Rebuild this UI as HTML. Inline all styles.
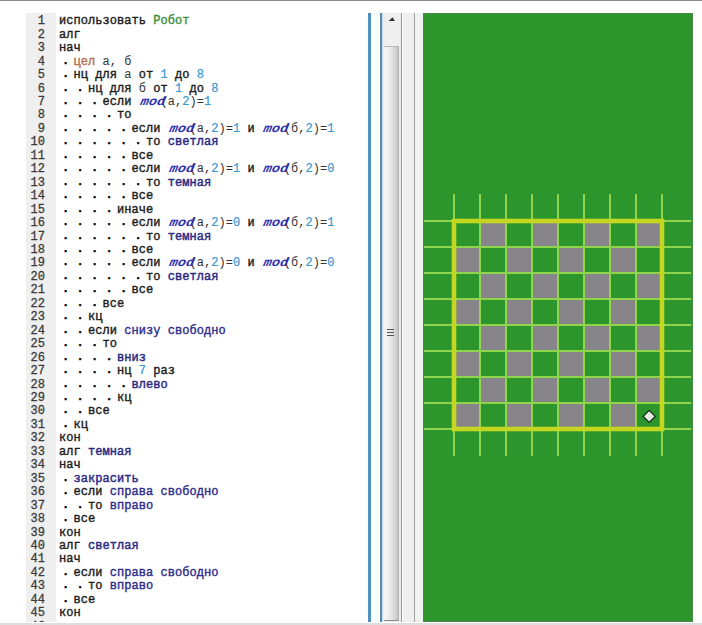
<!DOCTYPE html>
<html><head><meta charset="utf-8">
<style>
html,body{margin:0;padding:0;}
body{width:702px;height:625px;position:relative;overflow:hidden;background:#fff;font-family:"Liberation Mono",monospace;}
.abs{position:absolute;}
#topline{left:0;top:0;width:702px;height:1px;background:#8a8a8a;}
#botline{left:0;top:623px;width:702px;height:2px;background:#dedede;}
#gutter{left:26px;top:13px;width:30px;height:609px;background:#efefef;overflow:hidden;}
#nums{left:0px;top:2.3px;width:19px;text-align:right;font-size:12px;line-height:13.45px;color:#3c3c3c;white-space:pre;-webkit-text-stroke:0.3px #3c3c3c;}
#code{left:59px;top:15.3px;font-size:12px;letter-spacing:0.045px;line-height:13.45px;white-space:pre;color:#222;}
#code i{font-style:normal;}
#code .k{font-weight:normal;color:#1c1c1c;-webkit-text-stroke:0.4px #1c1c1c;}
#code .d{font-weight:bold;color:#000;position:relative;left:3px;top:-1px;-webkit-text-stroke:0.3px #000;}
#code .v{color:#333;}
#code .n{color:#3a98d0;-webkit-text-stroke:0.2px #3a98d0;}
#code .t{color:#b06c48;-webkit-text-stroke:0.35px #b06c48;}
#code .r{color:#3a8f3a;-webkit-text-stroke:0.4px #3a8f3a;}
#code .m{font-weight:bold;font-style:italic;color:#2e2eb0;display:inline-block;transform:scaleX(1.14) skewX(-10deg);transform-origin:0 100%;}
#code .a{color:#2a2a84;-webkit-text-stroke:0.45px #2a2a84;}
#code .c{color:#2e2e8c;-webkit-text-stroke:0.4px #2e2e8c;}
#bl1{left:368px;top:13px;width:3px;height:609px;background:#508fc0;}
#bl1b{left:371px;top:13px;width:9px;height:609px;background:#f4fcfe;}
#bl2{left:380px;top:13px;width:2px;height:609px;background:#6486a8;}
#bl2b{left:382px;top:13px;width:1px;height:609px;background:#c4def0;}
#sb{left:383px;top:13px;width:18px;height:609px;background:#efefef;}
#sbr{left:401px;top:13px;width:1px;height:609px;background:#959595;}
#arrow{left:388px;top:17px;width:0;height:0;border-left:3.5px solid transparent;border-right:3.5px solid transparent;border-bottom:4px solid #2a2a2a;}
#thumb{left:384px;top:46px;width:15px;height:575px;background:linear-gradient(to right,#f6f6f6 0%,#ececec 40%,#c6c6c6 100%);border-top:1px solid #b8b8b8;border-right:1px solid #b0b0b0;border-bottom:1px solid #8a8a8a;box-sizing:border-box;}
.grip{left:387px;width:7px;height:1px;background:#555;}
#p2{left:402px;top:13px;width:12px;height:609px;background:#efefef;}
#p2w{left:402px;top:13px;width:1px;height:609px;background:#fcfcfc;}
#p2l{left:414px;top:13px;width:1px;height:609px;background:#9e9e9e;}
#p3{left:415px;top:13px;width:8px;height:609px;background:#f1f2f2;}
</style></head><body>
<div class="abs" id="topline"></div>
<div class="abs" id="gutter"><div class="abs" id="nums">1
2
3
4
5
6
7
8
9
10
11
12
13
14
15
16
17
18
19
20
21
22
23
24
25
26
27
28
29
30
31
32
33
34
35
36
37
38
39
40
41
42
43
44
45
46</div></div>
<div class="abs" id="code"><i class="k">использовать</i> <i class="r">Робот</i>
<i class="k">алг</i>
<i class="k">нач</i>
<i class="d">.</i> <i class="t">цел</i> <i class="v">а, б</i>
<i class="d">.</i> <i class="k">нц для</i> <i class="v">а</i> <i class="k">от</i> <i class="n">1</i> <i class="k">до</i> <i class="n">8</i>
<i class="d">. .</i> <i class="k">нц для</i> <i class="v">б</i> <i class="k">от</i> <i class="n">1</i> <i class="k">до</i> <i class="n">8</i>
<i class="d">. . .</i> <i class="k">если</i> <i class="m">mod</i><i class="v">(а,</i><i class="n">2</i><i class="v">)=</i><i class="n">1</i>
<i class="d">. . . .</i> <i class="k">то</i>
<i class="d">. . . . .</i> <i class="k">если</i> <i class="m">mod</i><i class="v">(а,</i><i class="n">2</i><i class="v">)=</i><i class="n">1</i> <i class="k">и</i> <i class="m">mod</i><i class="v">(б,</i><i class="n">2</i><i class="v">)=</i><i class="n">1</i>
<i class="d">. . . . . .</i> <i class="k">то</i> <i class="a">светлая</i>
<i class="d">. . . . .</i> <i class="k">все</i>
<i class="d">. . . . .</i> <i class="k">если</i> <i class="m">mod</i><i class="v">(а,</i><i class="n">2</i><i class="v">)=</i><i class="n">1</i> <i class="k">и</i> <i class="m">mod</i><i class="v">(б,</i><i class="n">2</i><i class="v">)=</i><i class="n">0</i>
<i class="d">. . . . . .</i> <i class="k">то</i> <i class="a">темная</i>
<i class="d">. . . . .</i> <i class="k">все</i>
<i class="d">. . . .</i> <i class="k">иначе</i>
<i class="d">. . . . .</i> <i class="k">если</i> <i class="m">mod</i><i class="v">(а,</i><i class="n">2</i><i class="v">)=</i><i class="n">0</i> <i class="k">и</i> <i class="m">mod</i><i class="v">(б,</i><i class="n">2</i><i class="v">)=</i><i class="n">1</i>
<i class="d">. . . . . .</i> <i class="k">то</i> <i class="a">темная</i>
<i class="d">. . . . .</i> <i class="k">все</i>
<i class="d">. . . . .</i> <i class="k">если</i> <i class="m">mod</i><i class="v">(а,</i><i class="n">2</i><i class="v">)=</i><i class="n">0</i> <i class="k">и</i> <i class="m">mod</i><i class="v">(б,</i><i class="n">2</i><i class="v">)=</i><i class="n">0</i>
<i class="d">. . . . . .</i> <i class="k">то</i> <i class="a">светлая</i>
<i class="d">. . . . .</i> <i class="k">все</i>
<i class="d">. . .</i> <i class="k">все</i>
<i class="d">. .</i> <i class="k">кц</i>
<i class="d">. .</i> <i class="k">если</i> <i class="c">снизу свободно</i>
<i class="d">. . .</i> <i class="k">то</i>
<i class="d">. . . .</i> <i class="a">вниз</i>
<i class="d">. . . .</i> <i class="k">нц</i> <i class="n">7</i> <i class="k">раз</i>
<i class="d">. . . . .</i> <i class="a">влево</i>
<i class="d">. . . .</i> <i class="k">кц</i>
<i class="d">. .</i> <i class="k">все</i>
<i class="d">.</i> <i class="k">кц</i>
<i class="k">кон</i>
<i class="k">алг</i> <i class="a">темная</i>
<i class="k">нач</i>
<i class="d">.</i> <i class="a">закрасить</i>
<i class="d">.</i> <i class="k">если</i> <i class="c">справа свободно</i>
<i class="d">. .</i> <i class="k">то</i> <i class="c">вправо</i>
<i class="d">.</i> <i class="k">все</i>
<i class="k">кон</i>
<i class="k">алг</i> <i class="a">светлая</i>
<i class="k">нач</i>
<i class="d">.</i> <i class="k">если</i> <i class="c">справа свободно</i>
<i class="d">. .</i> <i class="k">то</i> <i class="c">вправо</i>
<i class="d">.</i> <i class="k">все</i>
<i class="k">кон</i></div>
<div class="abs" id="bl1"></div>
<div class="abs" id="bl1b"></div>
<div class="abs" id="bl2"></div>
<div class="abs" id="bl2b"></div>
<div class="abs" id="sb"></div>
<div class="abs" id="sbr"></div>
<svg class="abs" style="left:386px;top:15px" width="12" height="8" viewBox="386 15 12 8"><path d="M388.6 21 L395 21 L392.5 17.2 Z" fill="#333"/></svg>
<div class="abs" id="thumb"></div>
<div class="abs grip" style="top:329px"></div>
<div class="abs grip" style="top:332px"></div>
<div class="abs grip" style="top:335px"></div>
<div class="abs" id="p2"></div>
<div class="abs" id="p2w"></div>
<div class="abs" id="p2l"></div>
<div class="abs" id="p3"></div>
<svg width="270" height="609" viewBox="423 13 270 609" style="position:absolute;left:423px;top:13px">
<rect x="423" y="13" width="270" height="609" fill="#2c962c"/>
<rect x="481" y="222" width="24" height="24" fill="#878589"/>
<rect x="533" y="222" width="24" height="24" fill="#878589"/>
<rect x="585" y="222" width="24" height="24" fill="#878589"/>
<rect x="637" y="222" width="24" height="24" fill="#878589"/>
<rect x="455" y="248" width="24" height="24" fill="#878589"/>
<rect x="507" y="248" width="24" height="24" fill="#878589"/>
<rect x="559" y="248" width="24" height="24" fill="#878589"/>
<rect x="611" y="248" width="24" height="24" fill="#878589"/>
<rect x="481" y="274" width="24" height="24" fill="#878589"/>
<rect x="533" y="274" width="24" height="24" fill="#878589"/>
<rect x="585" y="274" width="24" height="24" fill="#878589"/>
<rect x="637" y="274" width="24" height="24" fill="#878589"/>
<rect x="455" y="300" width="24" height="24" fill="#878589"/>
<rect x="507" y="300" width="24" height="24" fill="#878589"/>
<rect x="559" y="300" width="24" height="24" fill="#878589"/>
<rect x="611" y="300" width="24" height="24" fill="#878589"/>
<rect x="481" y="326" width="24" height="24" fill="#878589"/>
<rect x="533" y="326" width="24" height="24" fill="#878589"/>
<rect x="585" y="326" width="24" height="24" fill="#878589"/>
<rect x="637" y="326" width="24" height="24" fill="#878589"/>
<rect x="455" y="352" width="24" height="24" fill="#878589"/>
<rect x="507" y="352" width="24" height="24" fill="#878589"/>
<rect x="559" y="352" width="24" height="24" fill="#878589"/>
<rect x="611" y="352" width="24" height="24" fill="#878589"/>
<rect x="481" y="378" width="24" height="24" fill="#878589"/>
<rect x="533" y="378" width="24" height="24" fill="#878589"/>
<rect x="585" y="378" width="24" height="24" fill="#878589"/>
<rect x="637" y="378" width="24" height="24" fill="#878589"/>
<rect x="455" y="404" width="24" height="24" fill="#878589"/>
<rect x="507" y="404" width="24" height="24" fill="#878589"/>
<rect x="559" y="404" width="24" height="24" fill="#878589"/>
<rect x="611" y="404" width="24" height="24" fill="#878589"/>
<rect x="453" y="194" width="2" height="262" fill="#8fd44a"/>
<rect x="424" y="220" width="267" height="2" fill="#8fd44a"/>
<rect x="479" y="194" width="2" height="262" fill="#8fd44a"/>
<rect x="424" y="246" width="267" height="2" fill="#8fd44a"/>
<rect x="505" y="194" width="2" height="262" fill="#8fd44a"/>
<rect x="424" y="272" width="267" height="2" fill="#8fd44a"/>
<rect x="531" y="194" width="2" height="262" fill="#8fd44a"/>
<rect x="424" y="298" width="267" height="2" fill="#8fd44a"/>
<rect x="557" y="194" width="2" height="262" fill="#8fd44a"/>
<rect x="424" y="324" width="267" height="2" fill="#8fd44a"/>
<rect x="583" y="194" width="2" height="262" fill="#8fd44a"/>
<rect x="424" y="350" width="267" height="2" fill="#8fd44a"/>
<rect x="609" y="194" width="2" height="262" fill="#8fd44a"/>
<rect x="424" y="376" width="267" height="2" fill="#8fd44a"/>
<rect x="635" y="194" width="2" height="262" fill="#8fd44a"/>
<rect x="424" y="402" width="267" height="2" fill="#8fd44a"/>
<rect x="661" y="194" width="2" height="262" fill="#8fd44a"/>
<rect x="424" y="428" width="267" height="2" fill="#8fd44a"/>
<rect x="454" y="221" width="208" height="208" fill="none" stroke="#c4d622" stroke-width="4.6"/>
<path d="M649.2 410.4 L655.2 416.4 L649.2 422.4 L643.2 416.4 Z" fill="#e2eee0" stroke="#1a2a1a" stroke-width="1.3"/>
<rect x="423.5" y="13.5" width="269" height="608" fill="none" stroke="#468a46" stroke-width="1"/>
</svg>
<div class="abs" id="botline"></div>
</body></html>
